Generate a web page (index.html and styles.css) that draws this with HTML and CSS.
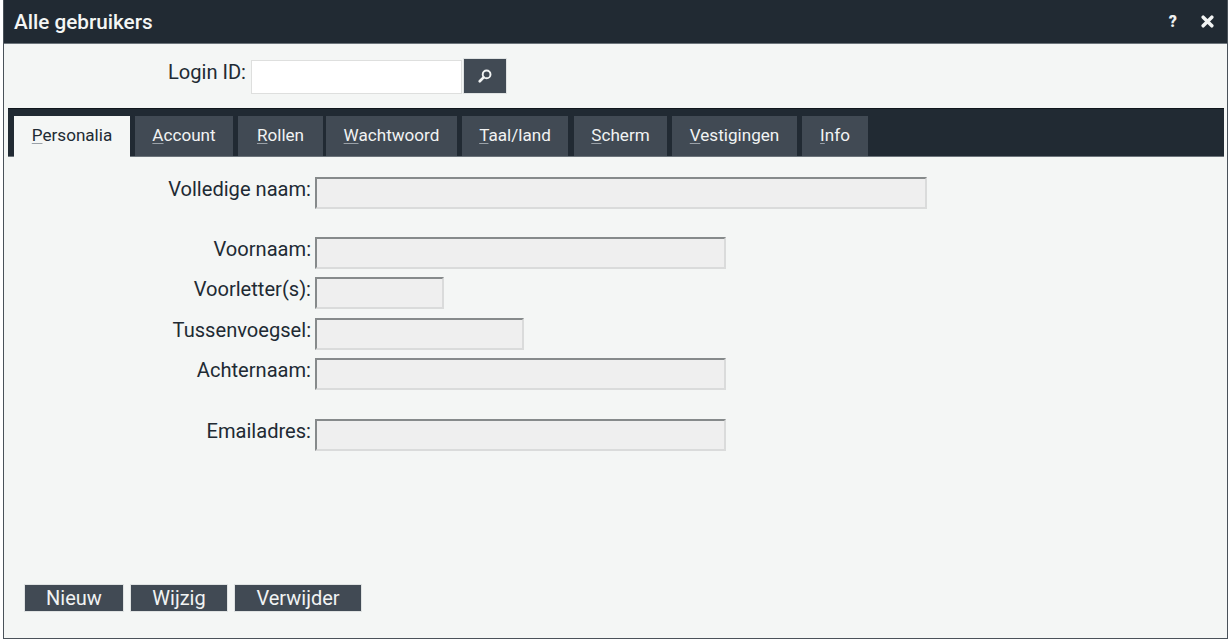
FILE: index.html
```html
<!DOCTYPE html>
<html lang="nl">
<head>
<meta charset="utf-8">
<title>Alle gebruikers</title>
<link rel="stylesheet" href="styles.css">
</head>
<body>
<div class="window">
  <header class="titlebar">
    <h1 class="title">Alle gebruikers</h1>
    <div class="title-actions">
      <span class="help">?</span>
      <svg class="close" viewBox="0 0 12 12" width="13" height="13"><path d="M2 2 L10 10 M10 2 L2 10" stroke="#f2f4f4" stroke-width="3.2" stroke-linecap="round"/></svg>
    </div>
  </header>
  <div class="login-row">
    <label class="login-label">Login ID:</label>
    <div class="login-input"></div>
    <button class="search-btn">
      <svg viewBox="0 0 14 14" width="16" height="16"><circle cx="8.4" cy="5.6" r="3.4" fill="none" stroke="#f2f4f4" stroke-width="1.7"/><path d="M5.8 8.2 L2.4 11.6" stroke="#f2f4f4" stroke-width="2.4" stroke-linecap="round"/></svg>
    </button>
  </div>
  <nav class="tabs">
    <div class="tab tab-active"><u>P</u>ersonalia</div>
    <div class="tab tab-account"><u>A</u>ccount</div>
    <div class="tab tab-rollen"><u>R</u>ollen</div>
    <div class="tab tab-wacht"><u>W</u>achtwoord</div>
    <div class="tab tab-taal"><u>T</u>aal/land</div>
    <div class="tab tab-scherm"><u>S</u>cherm</div>
    <div class="tab tab-vest"><u>V</u>estigingen</div>
    <div class="tab tab-info"><u>I</u>nfo</div>
  </nav>
  <main class="form">
    <div class="row row-full"><span class="label">Volledige naam:</span><div class="field w-full"></div></div>
    <div class="row"><span class="label">Voornaam:</span><div class="field w-long"></div></div>
    <div class="row"><span class="label">Voorletter(s):</span><div class="field w-short"></div></div>
    <div class="row"><span class="label">Tussenvoegsel:</span><div class="field w-mid"></div></div>
    <div class="row row-last"><span class="label">Achternaam:</span><div class="field w-long"></div></div>
    <div class="row"><span class="label">Emailadres:</span><div class="field w-long"></div></div>
  </main>
  <footer class="actions">
    <button class="action a-new">Nieuw</button>
    <button class="action a-edit">Wijzig</button>
    <button class="action a-del">Verwijder</button>
  </footer>
</div>
</body>
</html>
```
FILE: styles.css
```css
* { box-sizing: border-box; }
html, body { margin: 0; height: 100%; background: #fff; }
body { padding: 0 1px 0 3px; font-family: Roboto, "Liberation Sans", sans-serif; color: #212a33; overflow: hidden; }
.window {
  height: 639px;
  display: flex;
  flex-direction: column;
  background: #f4f6f5;
  border-right: 1px solid #4a525a;
  border-bottom: 1px solid #4a525a;
  border-left: 1px solid #4a525a;
}
.titlebar {
  height: 44px;
  flex: none;
  display: flex;
  align-items: center;
  justify-content: space-between;
  background: #212a33;
  border-bottom: 1px solid #6c747b;
  padding: 0 13px 0 10px;
  color: #f4f6f5;
}
.title { margin: 0; font-size: 20.7px; font-weight: 500; line-height: 44px; }
.title-actions { display: flex; align-items: center; gap: 24px; }
.help { font-size: 16px; font-weight: 900; line-height: 14px; color: #eef0f0; }
.close { display: block; }
.login-row { height: 64px; flex: none; display: flex; align-items: flex-start; padding-top: 14px; }
.login-label { width: 242px; text-align: right; font-size: 20.1px; line-height: 28px; flex: none; }
.login-input { width: 211px; height: 34px; margin: 2px 1px 0 5px; background: #fff; border: 1px solid #dedfde; }
.search-btn { width: 44px; height: 36px; padding: 0; display: flex; align-items: center; justify-content: center; background: #414a54; border: 1px solid #dfe2e2; }
.tabs {
  height: 49px;
  flex: none;
  margin: 0 3px 0 4px;
  padding: 7px 0 0 6px;
  display: flex;
  background: #212a33;
  border-top: 1px solid #10161c;
  border-bottom: 1px solid #6c747b;
}
.tab { height: 40px; background: #414a54; color: #f1f3f3; font-size: 17.1px; line-height: 39px; text-align: center; margin-right: 5px; flex: none; }
.tab u { text-decoration-color: #9aa1a8; text-decoration-thickness: 1px; text-underline-offset: 2px; }
.tab-active { width: 116px; height: 41px; background: #f4f6f5; color: #212a33; }
.tab-account { width: 98px; }
.tab-rollen { width: 85px; margin-right: 3px; }
.tab-wacht { width: 131px; }
.tab-taal { width: 106px; margin-right: 6px; }
.tab-scherm { width: 93px; }
.tab-vest { width: 125px; }
.tab-info { width: 66px; }
.form { padding-top: 20px; flex: 1; }
.row { display: flex; align-items: flex-start; margin-bottom: 8.3px; height: 32px; }
.row-full { margin-bottom: 28px; }
.row-last { margin-bottom: 29px; }
.label { width: 307px; flex: none; text-align: right; font-size: 20.1px; line-height: 24px; }
.field {
  height: 32px;
  margin-left: 4px;
  background: #efefef;
  border-style: solid;
  border-width: 2px;
  border-color: #868a8b #dadbdb #dadbdb #868a8b;
}
.w-full { width: 612px; }
.w-long { width: 410.5px; }
.w-short { width: 128.5px; }
.w-mid { width: 209px; }
.actions { flex: none; display: flex; gap: 6px; padding: 0 0 26px 20px; }
.action { height: 28px; padding: 0; background: #414a54; color: #f1f3f3; border: 1px solid #dfe2e2; font-family: inherit; font-size: 20px; line-height: 24px; }
.a-new { width: 100px; }
.a-edit { width: 98px; }
.a-del { width: 128px; }
```
